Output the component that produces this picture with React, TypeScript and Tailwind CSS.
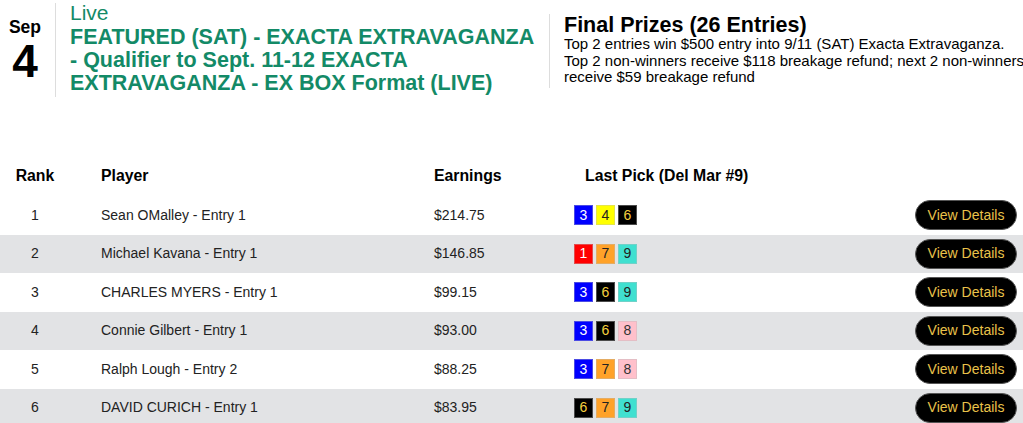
import React from 'react';

const colors: Record<number, { bg: string; fg: string }> = {
  1: { bg: 'bg-[#ff0000]', fg: 'text-white' },
  3: { bg: 'bg-[#0000ff]', fg: 'text-white' },
  4: { bg: 'bg-[#ffff00]', fg: 'text-[#222]' },
  6: { bg: 'bg-black', fg: 'text-[#f4d03f]' },
  7: { bg: 'bg-[#ffa229]', fg: 'text-[#222]' },
  8: { bg: 'bg-[#ffc0cb]', fg: 'text-[#333]' },
  9: { bg: 'bg-[#40e0d0]', fg: 'text-[#222]' },
};

const rows = [
  { rank: 1, player: 'Sean OMalley - Entry 1', earnings: '$214.75', picks: [3, 4, 6] },
  { rank: 2, player: 'Michael Kavana - Entry 1', earnings: '$146.85', picks: [1, 7, 9] },
  { rank: 3, player: 'CHARLES MYERS - Entry 1', earnings: '$99.15', picks: [3, 6, 9] },
  { rank: 4, player: 'Connie Gilbert - Entry 1', earnings: '$93.00', picks: [3, 6, 8] },
  { rank: 5, player: 'Ralph Lough - Entry 2', earnings: '$88.25', picks: [3, 7, 8] },
  { rank: 6, player: 'DAVID CURICH - Entry 1', earnings: '$83.95', picks: [6, 7, 9] },
];

function PickBox({ n }: { n: number }) {
  const c = colors[n];
  return (
    <span className={`${c.bg} ${c.fg} w-[19px] h-[20px] flex items-center justify-center text-[14px] border border-[#bbb]/40`}>
      {n}
    </span>
  );
}

export default function App() {
  return (
    <div className="w-[1023px] h-[423px] overflow-hidden bg-white font-['Liberation_Sans',Arial,sans-serif] text-[#222]">
      {/* Header */}
      <div className="flex pt-[3px]">
        <div className="w-[56px] shrink-0 flex flex-col items-center pt-[14px] pr-[5px] border-r border-[#ddd] h-[94px]">
          <span className="text-[17.5px] font-bold leading-[20px] text-black">Sep</span>
          <span className="text-[46px] font-bold leading-[44px] mt-[2px] text-black">4</span>
        </div>
        <div className="w-[493px] shrink-0 pl-[14px] text-[#138a67]">
          <div className="text-[21px] leading-[20px]">Live</div>
          <div className="text-[21.5px] font-bold leading-[23px] mt-[3px] w-[472px]">
            FEATURED (SAT) - EXACTA EXTRAVAGANZA - Qualifier to Sept. 11-12 EXACTA EXTRAVAGANZA - EX BOX Format (LIVE)
          </div>
        </div>
        <div className="border-l border-[#ddd] h-[74px] mt-[11px] pl-[14px] flex-1 min-w-0">
          <div className="text-[21.5px] font-bold leading-[22px] text-black">Final Prizes (26 Entries)</div>
          <p className="text-[15px] leading-[16.5px] text-black whitespace-nowrap">
            Top 2 entries win $500 entry into 9/11 (SAT) Exacta Extravaganza.
            <br />
            Top 2 non-winners receive $118 breakage refund; next 2 non-winners
            <br />
            receive $59 breakage refund
          </p>
        </div>
      </div>

      {/* Table */}
      <div className="mt-[59px]">
        <div className="flex items-center h-[40px] text-[15.8px] font-bold text-black">
          <div className="w-[70px] text-center">Rank</div>
          <div className="w-[333px] pl-[31px]">Player</div>
          <div className="w-[151px] pl-[31px]">Earnings</div>
          <div className="pl-[31px]">Last Pick (Del Mar #9)</div>
        </div>
        {rows.map((r, i) => (
          <div
            key={r.rank}
            className={`flex items-center h-[38.5px] text-[14px] ${i % 2 === 1 ? 'bg-[#e2e3e5]' : 'bg-white'}`}
          >
            <div className="w-[70px] text-center">{r.rank}</div>
            <div className="w-[333px] pl-[31px]">{r.player}</div>
            <div className="w-[171px] pl-[31px]">{r.earnings}</div>
            <div className="flex gap-[3px] flex-1">
              {r.picks.map((p) => (
                <PickBox key={p} n={p} />
              ))}
            </div>
            <button className="mr-[6px] w-[102px] h-[30px] rounded-full bg-black text-[#eac24a] text-[14px] border border-[#555]">
              View Details
            </button>
          </div>
        ))}
      </div>
    </div>
  );
}
